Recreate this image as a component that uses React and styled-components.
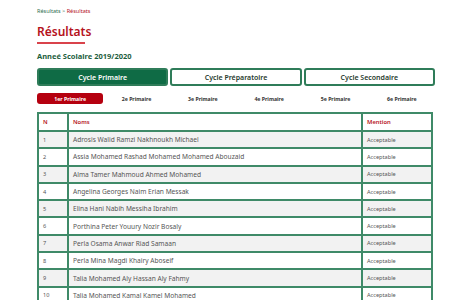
import React, { useState } from "react";
import styled, { createGlobalStyle } from "styled-components";

const GlobalStyle = createGlobalStyle`
  body {
    margin: 0;
    background: #fff;
    font-family: "Noto Sans", "Lato", sans-serif;
  }
`;

const Page = styled.div`
  width: 398px;
  padding: 7px 0 0 37px;
`;

const Breadcrumb = styled.div`
  font-size: 5.5px;
  color: #2d6e50;
  height: 8px;
  line-height: 8px;
  span {
    color: #b5121b;
  }
`;

const Title = styled.h1`
  margin: 9px 0 0;
  font-size: 12px;
  font-weight: 600;
  color: #b5121b;
  line-height: 15px;
  &:after {
    content: "";
    display: block;
    width: 48px;
    height: 2px;
    margin-top: 3px;
    background: #d9434b;
  }
`;

const Subtitle = styled.h2`
  margin: 7px 0 0;
  font-size: 7.5px;
  font-weight: 700;
  color: #1d5e3e;
  line-height: 10px;
`;

const Tabs = styled.div`
  display: grid;
  grid-template-columns: 1fr 1fr 1fr;
  gap: 2px;
  margin-top: 7px;
`;

const Tab = styled.button`
  height: 18px;
  border: 2px solid #2f7c59;
  border-radius: 3px;
  background: ${(p) => (p.$active ? "#0f6b45" : "#fff")};
  color: ${(p) => (p.$active ? "#fff" : "#1f3a2d")};
  font-family: inherit;
  font-size: 7px;
  font-weight: 600;
  padding: 0;
`;

const Levels = styled.div`
  display: grid;
  grid-template-columns: repeat(6, 1fr);
  margin-top: 7px;
`;

const Level = styled.button`
  height: 11px;
  border: none;
  border-radius: 3px;
  background: ${(p) => (p.$active ? "#b5000f" : "transparent")};
  color: ${(p) => (p.$active ? "#fff" : "#333")};
  font-family: inherit;
  font-size: 5.2px;
  font-weight: 700;
  padding: 0;
`;

const Table = styled.table`
  width: 396px;
  margin-top: 8px;
  border-collapse: collapse;
  color: #555;
  td,
  th {
    border: 2px solid #3f8a68;
    height: 15.3px;
    padding: 0 0 0 4px;
    text-align: left;
  }
  td {
    font-size: 5.6px;
  }
  td:nth-child(2) {
    font-size: 6.6px;
  }
  th {
    color: #b5121b;
    font-size: 5.8px;
    font-weight: 600;
    height: 16px;
  }
`;

const Row = styled.tr`
  background: ${(p) => (p.$odd ? "#f2f2f2" : "#fff")};
`;

const students = [
  "Adrosis Walid Ramzi Nakhnoukh Michael",
  "Assia Mohamed Rashad Mohamed Mohamed Abouzaid",
  "Alma Tamer Mahmoud Ahmed Mohamed",
  "Angelina Georges Naim Erian Messak",
  "Elina Hani Nabih Messiha Ibrahim",
  "Porthina Peter Youury Nozir Bosaly",
  "Perla Osama Anwar Riad Samaan",
  "Perla Mina Magdi Khairy Aboseif",
  "Talia Mohamed Aly Hassan Aly Fahmy",
  "Talia Mohamed Kamal Kamel Mohamed",
];

const cycles = ["Cycle Primaire", "Cycle Préparatoire", "Cycle Secondaire"];
const levels = ["1er Primaire", "2e Primaire", "3e Primaire", "4e Primaire", "5e Primaire", "6e Primaire"];

const App = () => {
  const [cycle, setCycle] = useState(0);
  const [level, setLevel] = useState(0);

  return (
    <Page>
      <GlobalStyle />
      <Breadcrumb>
        Résultats &gt; <span>Résultats</span>
      </Breadcrumb>
      <Title>Résultats</Title>
      <Subtitle>Anneé Scolaire 2019/2020</Subtitle>
      <Tabs>
        {cycles.map((c, i) => (
          <Tab key={c} $active={cycle === i} onClick={() => setCycle(i)}>
            {c}
          </Tab>
        ))}
      </Tabs>
      <Levels>
        {levels.map((l, i) => (
          <Level key={l} $active={level === i} onClick={() => setLevel(i)}>
            {l}
          </Level>
        ))}
      </Levels>
      <Table>
        <colgroup>
          <col style={{ width: 30 }} />
          <col />
          <col style={{ width: 70 }} />
        </colgroup>
        <thead>
          <tr>
            <th>N</th>
            <th>Noms</th>
            <th>Mention</th>
          </tr>
        </thead>
        <tbody>
          {students.map((s, i) => (
            <Row key={s} $odd={i % 2 === 0}>
              <td>{i + 1}</td>
              <td>{s}</td>
              <td>Acceptable</td>
            </Row>
          ))}
        </tbody>
      </Table>
    </Page>
  );
};

export default App;
